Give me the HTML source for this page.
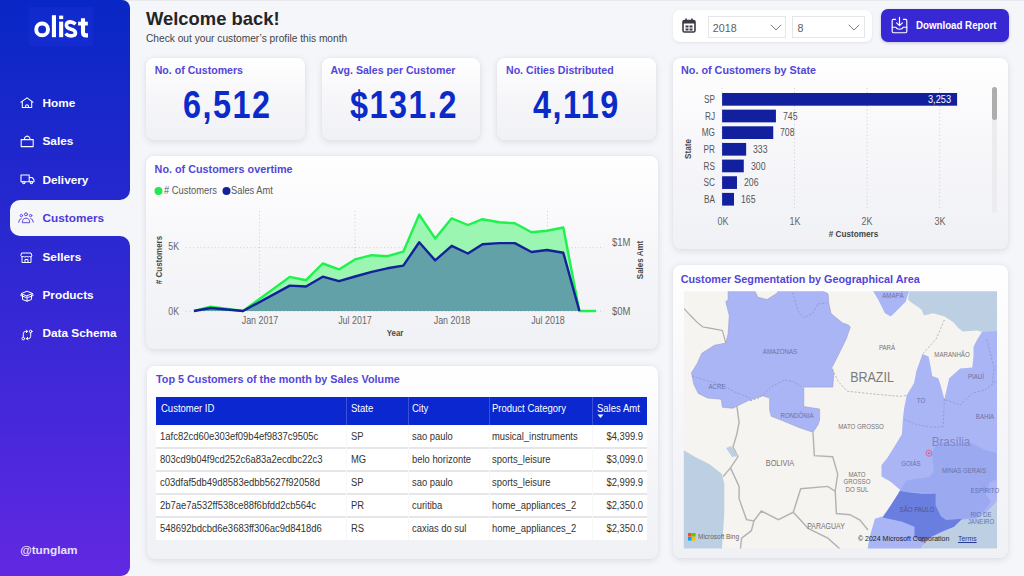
<!DOCTYPE html><html><head><meta charset="utf-8"><style>
html,body{margin:0;padding:0;}
body{width:1024px;height:576px;overflow:hidden;position:relative;background:#f5f6fa;font-family:"Liberation Sans", sans-serif;}
.t{position:absolute;white-space:nowrap;line-height:1;}
.card{position:absolute;border-radius:8px;background:linear-gradient(180deg,#ffffff 0%,#f7f7fa 45%,#f0f1f5 100%);box-shadow:0 1.5px 6px rgba(50,50,80,0.12),0 0 1.5px rgba(50,50,80,0.06);}
svg{position:absolute;overflow:visible;}
</style></head><body>

<div style="position:absolute;left:0px;top:0px;width:1024px;height:1px;background:#e9eaee"></div>
<div style="position:absolute;left:0px;top:0px;width:129.5px;height:199.5px;border-radius:0 8px 10px 0;background:linear-gradient(180deg,#0927c6 0%,#2a28d0 40%,#4428da 70%,#6228e2 100%);background-size:130px 576px;background-position:0 0px;"></div>
<div style="position:absolute;left:0px;top:190px;width:20px;height:56px;border-radius:0;background:linear-gradient(180deg,#0927c6 0%,#2a28d0 40%,#4428da 70%,#6228e2 100%);background-size:130px 576px;background-position:0 -190px;"></div>
<div style="position:absolute;left:0px;top:235.5px;width:129.5px;height:340.5px;border-radius:0 10px 9px 0;background:linear-gradient(180deg,#0927c6 0%,#2a28d0 40%,#4428da 70%,#6228e2 100%);background-size:130px 576px;background-position:0 -235.5px;"></div>
<div style="position:absolute;left:9.5px;top:199.5px;width:125px;height:36px;background:#f5f6fa;border-radius:10px 0 0 10px"></div>
<div style="position:absolute;left:29px;top:7px;width:64px;height:39px;background:rgba(40,60,240,0.18)"></div>
<svg style="left:0;top:0" width="100" height="50"><g fill="#ffffff"><circle cx="42.1" cy="29.4" r="5.9" fill="none" stroke="#ffffff" stroke-width="3.9"/><rect x="51.9" y="15.2" width="4.1" height="22"/><rect x="59.1" y="15.6" width="4.1" height="3.5"/><rect x="59.1" y="21.6" width="4.1" height="15.6"/><rect x="78.1" y="21.7" width="9.7" height="3.8"/></g><g fill="none" stroke="#ffffff" stroke-linecap="butt"><path d="M75.6 24.2 Q72.5 21.6 69.8 21.9 Q66.3 22.3 66.4 25.4 Q66.6 28 70.6 29 Q75.4 30.2 75.5 33.1 Q75.5 35.9 71.2 35.9 Q67.8 36 65.6 33.6" stroke-width="3.6"/><path d="M83 18.3 V32.2 Q83 35.4 86.2 35.4 H88" stroke-width="4.1"/></g></svg>
<div class="t" style="left:42.50px;top:98.01px;font-size:11.8px;font-weight:700;color:#ffffff;transform-origin:0 0;">Home</div>
<div class="t" style="left:42.50px;top:136.41px;font-size:11.8px;font-weight:700;color:#ffffff;transform-origin:0 0;">Sales</div>
<div class="t" style="left:42.50px;top:175.01px;font-size:11.8px;font-weight:700;color:#ffffff;transform-origin:0 0;">Delivery</div>
<div class="t" style="left:42.50px;top:213.41px;font-size:11.8px;font-weight:700;color:#4b3ad8;transform-origin:0 0;">Customers</div>
<div class="t" style="left:42.50px;top:251.71px;font-size:11.8px;font-weight:700;color:#ffffff;transform-origin:0 0;">Sellers</div>
<div class="t" style="left:42.50px;top:290.11px;font-size:11.8px;font-weight:700;color:#ffffff;transform-origin:0 0;">Products</div>
<div class="t" style="left:42.50px;top:328.41px;font-size:11.8px;font-weight:700;color:#ffffff;transform-origin:0 0;">Data Schema</div>
<div class="t" style="left:20.20px;top:545.31px;font-size:11.8px;font-weight:700;color:#e6e0fa;transform-origin:0 0;">@tunglam</div>
<svg style="left:20px;top:96.5px" width="14" height="12" viewBox="0 0 14 12"><g fill="none" stroke="#ffffff" stroke-width="1.05" stroke-linejoin="round" stroke-linecap="round"><path d="M1 5.2 L7 0.8 L13 5.2 M2.3 4.3 V10.5 H11.7 V4.3 M5.6 10.5 V8.6 Q7 7 8.4 8.6 V10.5"/></g></svg>
<svg style="left:19.5px;top:135px" width="15" height="12.5" viewBox="0 0 15 12.5"><g fill="none" stroke="#ffffff" stroke-width="1.05" stroke-linejoin="round" stroke-linecap="round"><path d="M1.2 4.6 H13.2 V11.6 H1.2 Z M4.6 4.6 V2.8 Q7.2 -0.6 9.8 2.8 V4.6"/></g></svg>
<svg style="left:19.5px;top:173.5px" width="15" height="11" viewBox="0 0 15 11"><g fill="none" stroke="#ffffff" stroke-width="1.05" stroke-linejoin="round" stroke-linecap="round"><path d="M1 1 H9.2 V7.8 H1 Z M9.2 3.4 H12 L14 5.8 V7.8 H9.2"/><circle cx="3.8" cy="8.6" r="1.2"/><circle cx="11.4" cy="8.6" r="1.2"/></g></svg>
<svg style="left:18px;top:211.5px" width="16" height="12" viewBox="0 0 16 12"><g fill="none" stroke="#5a48dc" stroke-width="1.0" stroke-linejoin="round" stroke-linecap="round"><circle cx="8" cy="2.3" r="1.5"/><circle cx="3.4" cy="3.6" r="1.2"/><circle cx="12.6" cy="3.6" r="1.2"/><path d="M4.3 10.3 Q4.3 6.2 8 6.2 Q11.7 6.2 11.7 10.3 Z M0.7 10.2 Q0.9 6.6 3.2 6.6 M15.3 10.2 Q15.1 6.6 12.8 6.6"/></g></svg>
<svg style="left:20.5px;top:251.5px" width="12" height="12" viewBox="0 0 12 12"><g fill="none" stroke="#ffffff" stroke-width="1.0" stroke-linejoin="round" stroke-linecap="round"><path d="M1 1 H10 L11 4 Q10 5.5 8.5 4.5 Q7.5 5.5 5.5 4.5 Q3.5 5.5 2.5 4.5 Q1 5.5 0 4 Z M1 5 V10.5 H10 V5 M4 10.5 V7.5 H7 V10.5"/></g></svg>
<svg style="left:19.5px;top:289.5px" width="14" height="12" viewBox="0 0 14 12"><g fill="none" stroke="#ffffff" stroke-width="1.0" stroke-linejoin="round" stroke-linecap="round"><path d="M1.5 3.5 L7 1.2 L12.5 3.5 L7 5.8 Z M2.5 5 V9.5 L7 11.2 L11.5 9.5 V5 M7 5.8 V11.2 M1.5 3.5 L0.8 5.5 L6 7.5 M12.5 3.5 L13.2 5.5 L8 7.5"/></g></svg>
<svg style="left:20.5px;top:328.5px" width="12" height="12" viewBox="0 0 12 12"><g fill="none" stroke="#ffffff" stroke-width="1.0" stroke-linejoin="round" stroke-linecap="round"><circle cx="2.3" cy="9.6" r="1.3"/><circle cx="9.7" cy="2.4" r="1.3"/><path d="M2.3 8.3 V4.6 Q2.3 2.4 4.5 2.4 H6.6 M5.3 1.1 L6.6 2.4 L5.3 3.7 M9.7 3.7 V7.4 Q9.7 9.6 7.5 9.6 H5.4 M6.7 8.3 L5.4 9.6 L6.7 10.9"/></g></svg>
<div class="t" style="left:146.00px;top:9.82px;font-size:18.4px;font-weight:700;color:#252525;transform-origin:0 0;">Welcome back!</div>
<div class="t" style="left:146.00px;top:34.27px;font-size:10.2px;font-weight:400;color:#444444;transform-origin:0 0;">Check out your customer&#8217;s profile this month</div>
<div style="position:absolute;left:673px;top:10px;width:199px;height:32px;background:#ffffff;border-radius:7px;box-shadow:0 1px 3px rgba(60,60,90,0.10)"></div>
<svg style="left:682px;top:18px" width="14" height="15" viewBox="0 0 14 15"><rect x="1" y="2.5" width="12" height="11.5" rx="1.5" fill="none" stroke="#3a3a48" stroke-width="1.6"/><rect x="1" y="2.5" width="12" height="3" fill="#3a3a48"/><rect x="3.3" y="0.5" width="1.6" height="3" fill="#3a3a48"/><rect x="9.1" y="0.5" width="1.6" height="3" fill="#3a3a48"/><rect x="3.5" y="7.5" width="3" height="2" fill="#3a3a48"/><rect x="7.5" y="7.5" width="3" height="2" fill="#3a3a48"/><rect x="3.5" y="10.5" width="3" height="2" fill="#3a3a48"/><rect x="7.5" y="10.5" width="3" height="2" fill="#3a3a48"/></svg>
<div style="position:absolute;left:708px;top:16px;width:78px;height:21.5px;box-sizing:border-box;border:1px solid #e6e6e8;background:#fff"></div>
<div style="position:absolute;left:792.3px;top:16px;width:72.3px;height:21.5px;box-sizing:border-box;border:1px solid #e6e6e8;background:#fff"></div>
<div class="t" style="left:712.80px;top:23.24px;font-size:10.7px;font-weight:400;color:#606060;transform-origin:0 0;">2018</div>
<div class="t" style="left:797.40px;top:23.24px;font-size:10.7px;font-weight:400;color:#606060;transform-origin:0 0;">8</div>
<svg style="left:769.5px;top:24px" width="12" height="7" viewBox="0 0 12 7"><path d="M0.8 0.8 L6 6 L11.2 0.8" fill="none" stroke="#7a8088" stroke-width="1"/></svg>
<svg style="left:848.2px;top:24px" width="12" height="7" viewBox="0 0 12 7"><path d="M0.8 0.8 L6 6 L11.2 0.8" fill="none" stroke="#7a8088" stroke-width="1"/></svg>
<div style="position:absolute;left:881px;top:9px;width:128px;height:32.5px;background:#3828d4;border-radius:7px;box-shadow:0 1px 3px rgba(40,30,120,0.25)"></div>
<svg style="left:891px;top:16px" width="17" height="18" viewBox="0 0 17 18"><g fill="none" stroke="#ffffff" stroke-width="1.15" stroke-linejoin="round" stroke-linecap="round"><path d="M4.6 3.3 H2.3 Q1.2 3.3 1.2 4.4 V15.6 Q1.2 16.7 2.3 16.7 H14.7 Q15.8 16.7 15.8 15.6 V4.4 Q15.8 3.3 14.7 3.3 H12.4"/><path d="M1.2 11.2 H4.8 Q5.6 13.2 8.5 13.2 Q11.4 13.2 12.2 11.2 H15.8"/><path d="M8.5 1.2 V9.5 M5.6 6.8 L8.5 9.7 L11.4 6.8"/></g></svg>
<div class="t" style="left:915.60px;top:21.20px;font-size:10.4px;font-weight:700;color:#ffffff;transform:scaleX(0.935);transform-origin:0 0;">Download Report</div>
<div class="card" style="left:146px;top:57.8px;width:159px;height:82px;"></div>
<div class="t" style="left:154.70px;top:64.83px;font-size:10.6px;font-weight:700;color:#5246d8;transform-origin:0 0;">No. of Customers</div>
<div class="t" style="left:183.00px;top:84.99px;font-size:39px;font-weight:700;color:#0b2bc9;transform:scaleX(0.83);transform-origin:0 0;letter-spacing:1.8px;">6,512</div>
<div class="card" style="left:321.7px;top:57.8px;width:158.5px;height:82px;"></div>
<div class="t" style="left:330.40px;top:64.83px;font-size:10.6px;font-weight:700;color:#5246d8;transform-origin:0 0;">Avg. Sales per Customer</div>
<div class="t" style="left:350.00px;top:84.99px;font-size:39px;font-weight:700;color:#0b2bc9;transform:scaleX(0.83);transform-origin:0 0;letter-spacing:1.8px;">$131.2</div>
<div class="card" style="left:497.3px;top:57.8px;width:158.5px;height:82px;"></div>
<div class="t" style="left:506.00px;top:64.83px;font-size:10.6px;font-weight:700;color:#5246d8;transform-origin:0 0;">No. Cities Distributed</div>
<div class="t" style="left:533.00px;top:84.99px;font-size:39px;font-weight:700;color:#0b2bc9;transform:scaleX(0.83);transform-origin:0 0;letter-spacing:1.8px;">4,119</div>
<div class="card" style="left:146px;top:156.3px;width:511.5px;height:192.5px;"></div>
<div class="t" style="left:154.60px;top:163.86px;font-size:10.8px;font-weight:700;color:#5246d8;transform-origin:0 0;">No. of Customers overtime</div>
<svg style="left:154px;top:186px" width="80" height="10"><circle cx="4.5" cy="5" r="4" fill="#22e854"/><circle cx="226" cy="5" r="0" fill="none"/></svg>
<svg style="left:221.5px;top:186px" width="10" height="10"><circle cx="4.5" cy="5" r="4" fill="#13209a"/></svg>
<div class="t" style="left:164.40px;top:186.03px;font-size:10px;font-weight:400;color:#5a5a5a;transform:scaleX(0.935);transform-origin:0 0;"># Customers</div>
<div class="t" style="left:231.40px;top:186.03px;font-size:10px;font-weight:400;color:#5a5a5a;transform:scaleX(0.93);transform-origin:0 0;">Sales Amt</div>
<div class="t" style="left:-221.00px;width:400px;text-align:right;top:242.34px;font-size:10px;font-weight:400;color:#666666;transform:scaleX(0.88);transform-origin:100% 0;">5K</div>
<div class="t" style="left:-221.00px;width:400px;text-align:right;top:306.54px;font-size:10px;font-weight:400;color:#666666;transform:scaleX(0.88);transform-origin:100% 0;">0K</div>
<div class="t" style="left:611.70px;top:238.44px;font-size:10px;font-weight:400;color:#666666;transform:scaleX(0.95);transform-origin:0 0;">$1M</div>
<div class="t" style="left:611.70px;top:307.14px;font-size:10px;font-weight:400;color:#666666;transform:scaleX(0.95);transform-origin:0 0;">$0M</div>
<div class="t" style="left:59.50px;width:400px;text-align:center;top:316.04px;font-size:10px;font-weight:400;color:#666666;transform:scaleX(0.89);transform-origin:50% 0;">Jan 2017</div>
<div class="t" style="left:155.00px;width:400px;text-align:center;top:316.04px;font-size:10px;font-weight:400;color:#666666;transform:scaleX(0.89);transform-origin:50% 0;">Jul 2017</div>
<div class="t" style="left:251.70px;width:400px;text-align:center;top:316.04px;font-size:10px;font-weight:400;color:#666666;transform:scaleX(0.89);transform-origin:50% 0;">Jan 2018</div>
<div class="t" style="left:347.50px;width:400px;text-align:center;top:316.04px;font-size:10px;font-weight:400;color:#666666;transform:scaleX(0.89);transform-origin:50% 0;">Jul 2018</div>
<div class="t" style="left:195.20px;width:400px;text-align:center;top:328.98px;font-size:9px;font-weight:700;color:#4a4a4a;transform:scaleX(0.88);transform-origin:50% 0;">Year</div>
<div class="t" style="left:158.5px;top:260px;font-size:9px;font-weight:700;color:#484848;transform:translate(-50%,-50%) rotate(-90deg) scaleX(0.885);">&#35; Customers</div>
<div class="t" style="left:640.2px;top:260px;font-size:9px;font-weight:700;color:#484848;transform:translate(-50%,-50%) rotate(-90deg) scaleX(0.887);">Sales Amt</div>
<svg style="left:0;top:0" width="1024" height="576"><g stroke="#cdcdd2" stroke-width="1" stroke-dasharray="1,2.6"><line x1="186" y1="247.7" x2="604" y2="247.7"/><line x1="186" y1="311.3" x2="604" y2="311.3"/><line x1="259.5" y1="211" x2="259.5" y2="311"/><line x1="355" y1="211" x2="355" y2="311"/><line x1="451.7" y1="211" x2="451.7" y2="311"/><line x1="547.5" y1="211" x2="547.5" y2="311"/></g><polygon points="194.0,311.0 210.6,306.7 243.0,311.0 289.8,276.9 306.0,280.2 322.7,263.5 339.0,269.4 355.0,259.4 371.7,255.2 387.3,256.2 403.3,251.7 419.2,214.6 435.2,238.5 451.7,218.3 467.9,225.0 482.5,219.2 499.2,222.3 514.8,223.3 531.5,232.3 547.0,230.8 563.3,227.5 579.4,311.0 596.0,311.0 194,311" fill="#9af6b0"/><polygon points="194.0,311.0 210.6,308.0 243.0,311.0 289.8,285.6 306.0,286.5 322.7,276.7 339.0,281.2 355.0,276.5 371.7,271.9 387.3,268.3 403.3,265.6 419.2,242.3 435.2,260.4 451.7,245.8 467.9,253.5 482.5,244.2 499.2,243.1 514.8,243.1 531.5,252.0 547.0,250.0 563.3,252.7 579.4,311.0 194,311" fill="#63a1a8"/><polyline points="194.0,311.0 210.6,306.7 243.0,311.0 289.8,276.9 306.0,280.2 322.7,263.5 339.0,269.4 355.0,259.4 371.7,255.2 387.3,256.2 403.3,251.7 419.2,214.6 435.2,238.5 451.7,218.3 467.9,225.0 482.5,219.2 499.2,222.3 514.8,223.3 531.5,232.3 547.0,230.8 563.3,227.5 579.4,311.0 596.0,311.0" fill="none" stroke="#1ef24c" stroke-width="2.4" stroke-linejoin="round"/><polyline points="194.0,311.0 210.6,308.0 243.0,311.0 289.8,285.6 306.0,286.5 322.7,276.7 339.0,281.2 355.0,276.5 371.7,271.9 387.3,268.3 403.3,265.6 419.2,242.3 435.2,260.4 451.7,245.8 467.9,253.5 482.5,244.2 499.2,243.1 514.8,243.1 531.5,252.0 547.0,250.0 563.3,252.7 579.4,311.0" fill="none" stroke="#14229a" stroke-width="2.4" stroke-linejoin="round"/></svg>
<div class="card" style="left:146.5px;top:365.7px;width:511.2px;height:193px;"></div>
<div class="t" style="left:156.00px;top:373.76px;font-size:10.8px;font-weight:700;color:#5246d8;transform-origin:0 0;">Top 5 Customers of the month by Sales Volume</div>
<div style="position:absolute;left:156px;top:396.5px;width:491px;height:28px;background:#0b27cf"></div>
<div style="position:absolute;left:346.3px;top:396.5px;width:1px;height:28px;background:#3a50dc"></div>
<div style="position:absolute;left:408.3px;top:396.5px;width:1px;height:28px;background:#3a50dc"></div>
<div style="position:absolute;left:488.5px;top:396.5px;width:1px;height:28px;background:#3a50dc"></div>
<div style="position:absolute;left:592.4px;top:396.5px;width:1px;height:28px;background:#3a50dc"></div>
<div style="position:absolute;left:156px;top:424.5px;width:491px;height:115.5px;background:#ffffff"></div>
<div style="position:absolute;left:156px;top:447.0px;width:491px;height:1.6px;background:#e6e6e9"></div>
<div style="position:absolute;left:156px;top:470.1px;width:491px;height:1.6px;background:#e6e6e9"></div>
<div style="position:absolute;left:156px;top:493.2px;width:491px;height:1.6px;background:#e6e6e9"></div>
<div style="position:absolute;left:156px;top:516.3px;width:491px;height:1.6px;background:#e6e6e9"></div>
<div style="position:absolute;left:346.3px;top:424.5px;width:1px;height:115.5px;background:#f7f7f8"></div>
<div style="position:absolute;left:408.3px;top:424.5px;width:1px;height:115.5px;background:#f7f7f8"></div>
<div style="position:absolute;left:488.5px;top:424.5px;width:1px;height:115.5px;background:#f7f7f8"></div>
<div style="position:absolute;left:592.4px;top:424.5px;width:1px;height:115.5px;background:#f7f7f8"></div>
<div class="t" style="left:160.50px;top:403.54px;font-size:10px;font-weight:400;color:#ffffff;transform:scaleX(0.95);transform-origin:0 0;">Customer ID</div>
<div class="t" style="left:350.70px;top:403.54px;font-size:10px;font-weight:400;color:#ffffff;transform:scaleX(0.95);transform-origin:0 0;">State</div>
<div class="t" style="left:412.40px;top:403.54px;font-size:10px;font-weight:400;color:#ffffff;transform:scaleX(0.95);transform-origin:0 0;">City</div>
<div class="t" style="left:492.40px;top:403.54px;font-size:10px;font-weight:400;color:#ffffff;transform:scaleX(0.95);transform-origin:0 0;">Product Category</div>
<div class="t" style="left:596.60px;top:403.54px;font-size:10px;font-weight:400;color:#ffffff;transform:scaleX(0.95);transform-origin:0 0;">Sales Amt</div>
<svg style="left:596.5px;top:414px" width="8" height="5"><path d="M0.5 0.5 H6.5 L3.5 4 Z" fill="#ffffff"/></svg>
<div class="t" style="left:160.30px;top:431.74px;font-size:10px;font-weight:400;color:#333333;transform:scaleX(0.946);transform-origin:0 0;">1afc82cd60e303ef09b4ef9837c9505c</div>
<div class="t" style="left:350.70px;top:431.74px;font-size:10px;font-weight:400;color:#333333;transform:scaleX(0.94);transform-origin:0 0;">SP</div>
<div class="t" style="left:412.40px;top:431.74px;font-size:10px;font-weight:400;color:#333333;transform:scaleX(0.94);transform-origin:0 0;">sao paulo</div>
<div class="t" style="left:492.40px;top:431.74px;font-size:10px;font-weight:400;color:#333333;transform:scaleX(0.94);transform-origin:0 0;">musical_instruments</div>
<div class="t" style="left:243.00px;width:400px;text-align:right;top:431.74px;font-size:10px;font-weight:400;color:#333333;transform:scaleX(0.94);transform-origin:100% 0;">$4,399.9</div>
<div class="t" style="left:160.30px;top:454.84px;font-size:10px;font-weight:400;color:#333333;transform:scaleX(0.946);transform-origin:0 0;">803cd9b04f9cd252c6a83a2ecdbc22c3</div>
<div class="t" style="left:350.70px;top:454.84px;font-size:10px;font-weight:400;color:#333333;transform:scaleX(0.94);transform-origin:0 0;">MG</div>
<div class="t" style="left:412.40px;top:454.84px;font-size:10px;font-weight:400;color:#333333;transform:scaleX(0.94);transform-origin:0 0;">belo horizonte</div>
<div class="t" style="left:492.40px;top:454.84px;font-size:10px;font-weight:400;color:#333333;transform:scaleX(0.94);transform-origin:0 0;">sports_leisure</div>
<div class="t" style="left:243.00px;width:400px;text-align:right;top:454.84px;font-size:10px;font-weight:400;color:#333333;transform:scaleX(0.94);transform-origin:100% 0;">$3,099.0</div>
<div class="t" style="left:160.30px;top:477.94px;font-size:10px;font-weight:400;color:#333333;transform:scaleX(0.946);transform-origin:0 0;">c03dfaf5db49d8583edbb5627f92058d</div>
<div class="t" style="left:350.70px;top:477.94px;font-size:10px;font-weight:400;color:#333333;transform:scaleX(0.94);transform-origin:0 0;">SP</div>
<div class="t" style="left:412.40px;top:477.94px;font-size:10px;font-weight:400;color:#333333;transform:scaleX(0.94);transform-origin:0 0;">sao paulo</div>
<div class="t" style="left:492.40px;top:477.94px;font-size:10px;font-weight:400;color:#333333;transform:scaleX(0.94);transform-origin:0 0;">sports_leisure</div>
<div class="t" style="left:243.00px;width:400px;text-align:right;top:477.94px;font-size:10px;font-weight:400;color:#333333;transform:scaleX(0.94);transform-origin:100% 0;">$2,999.9</div>
<div class="t" style="left:160.30px;top:501.04px;font-size:10px;font-weight:400;color:#333333;transform:scaleX(0.946);transform-origin:0 0;">2b7ae7a532ff538ce88f6bfdd2cb564c</div>
<div class="t" style="left:350.70px;top:501.04px;font-size:10px;font-weight:400;color:#333333;transform:scaleX(0.94);transform-origin:0 0;">PR</div>
<div class="t" style="left:412.40px;top:501.04px;font-size:10px;font-weight:400;color:#333333;transform:scaleX(0.94);transform-origin:0 0;">curitiba</div>
<div class="t" style="left:492.40px;top:501.04px;font-size:10px;font-weight:400;color:#333333;transform:scaleX(0.94);transform-origin:0 0;">home_appliances_2</div>
<div class="t" style="left:243.00px;width:400px;text-align:right;top:501.04px;font-size:10px;font-weight:400;color:#333333;transform:scaleX(0.94);transform-origin:100% 0;">$2,350.0</div>
<div class="t" style="left:160.30px;top:524.13px;font-size:10px;font-weight:400;color:#333333;transform:scaleX(0.946);transform-origin:0 0;">548692bdcbd6e3683ff306ac9d8418d6</div>
<div class="t" style="left:350.70px;top:524.13px;font-size:10px;font-weight:400;color:#333333;transform:scaleX(0.94);transform-origin:0 0;">RS</div>
<div class="t" style="left:412.40px;top:524.13px;font-size:10px;font-weight:400;color:#333333;transform:scaleX(0.94);transform-origin:0 0;">caxias do sul</div>
<div class="t" style="left:492.40px;top:524.13px;font-size:10px;font-weight:400;color:#333333;transform:scaleX(0.94);transform-origin:0 0;">home_appliances_2</div>
<div class="t" style="left:243.00px;width:400px;text-align:right;top:524.13px;font-size:10px;font-weight:400;color:#333333;transform:scaleX(0.94);transform-origin:100% 0;">$2,350.0</div>
<div class="card" style="left:673.3px;top:57.8px;width:334.5px;height:191px;"></div>
<div class="t" style="left:681.00px;top:64.66px;font-size:10.8px;font-weight:700;color:#5246d8;transform-origin:0 0;">No. of Customers by State</div>
<svg style="left:0;top:0" width="1024" height="576"><g stroke="#cdcdd2" stroke-width="1" stroke-dasharray="1,2.6"><line x1="722.1" y1="88" x2="722.1" y2="210"/><line x1="794.5" y1="88" x2="794.5" y2="210"/><line x1="867.1" y1="88" x2="867.1" y2="210"/><line x1="939.7" y1="88" x2="939.7" y2="210"/></g><rect x="722.1" y="93.00" width="235.00" height="12.7" fill="#12209e"/><rect x="722.1" y="109.65" width="53.82" height="12.7" fill="#12209e"/><rect x="722.1" y="126.30" width="51.15" height="12.7" fill="#12209e"/><rect x="722.1" y="142.95" width="24.06" height="12.7" fill="#12209e"/><rect x="722.1" y="159.60" width="21.67" height="12.7" fill="#12209e"/><rect x="722.1" y="176.25" width="14.88" height="12.7" fill="#12209e"/><rect x="722.1" y="192.90" width="11.92" height="12.7" fill="#12209e"/></svg>
<div class="t" style="left:314.90px;width:400px;text-align:right;top:95.03px;font-size:10px;font-weight:400;color:#555555;transform:scaleX(0.82);transform-origin:100% 0;">SP</div>
<div class="t" style="left:550.50px;width:400px;text-align:right;top:95.03px;font-size:10px;font-weight:400;color:#ffffff;transform:scaleX(0.92);transform-origin:100% 0;">3,253</div>
<div class="t" style="left:314.90px;width:400px;text-align:right;top:111.69px;font-size:10px;font-weight:400;color:#555555;transform:scaleX(0.82);transform-origin:100% 0;">RJ</div>
<div class="t" style="left:782.72px;top:111.69px;font-size:10px;font-weight:400;color:#555555;transform:scaleX(0.87);transform-origin:0 0;">745</div>
<div class="t" style="left:314.90px;width:400px;text-align:right;top:128.34px;font-size:10px;font-weight:400;color:#555555;transform:scaleX(0.82);transform-origin:100% 0;">MG</div>
<div class="t" style="left:780.05px;top:128.34px;font-size:10px;font-weight:400;color:#555555;transform:scaleX(0.87);transform-origin:0 0;">708</div>
<div class="t" style="left:314.90px;width:400px;text-align:right;top:144.98px;font-size:10px;font-weight:400;color:#555555;transform:scaleX(0.82);transform-origin:100% 0;">PR</div>
<div class="t" style="left:752.96px;top:144.98px;font-size:10px;font-weight:400;color:#555555;transform:scaleX(0.87);transform-origin:0 0;">333</div>
<div class="t" style="left:314.90px;width:400px;text-align:right;top:161.63px;font-size:10px;font-weight:400;color:#555555;transform:scaleX(0.82);transform-origin:100% 0;">RS</div>
<div class="t" style="left:750.57px;top:161.63px;font-size:10px;font-weight:400;color:#555555;transform:scaleX(0.87);transform-origin:0 0;">300</div>
<div class="t" style="left:314.90px;width:400px;text-align:right;top:178.28px;font-size:10px;font-weight:400;color:#555555;transform:scaleX(0.82);transform-origin:100% 0;">SC</div>
<div class="t" style="left:743.78px;top:178.28px;font-size:10px;font-weight:400;color:#555555;transform:scaleX(0.87);transform-origin:0 0;">206</div>
<div class="t" style="left:314.90px;width:400px;text-align:right;top:194.93px;font-size:10px;font-weight:400;color:#555555;transform:scaleX(0.82);transform-origin:100% 0;">BA</div>
<div class="t" style="left:740.82px;top:194.93px;font-size:10px;font-weight:400;color:#555555;transform:scaleX(0.87);transform-origin:0 0;">165</div>
<div class="t" style="left:522.90px;width:400px;text-align:center;top:217.13px;font-size:10px;font-weight:400;color:#666666;transform:scaleX(0.9);transform-origin:50% 0;">0K</div>
<div class="t" style="left:595.10px;width:400px;text-align:center;top:217.13px;font-size:10px;font-weight:400;color:#666666;transform:scaleX(0.9);transform-origin:50% 0;">1K</div>
<div class="t" style="left:667.10px;width:400px;text-align:center;top:217.13px;font-size:10px;font-weight:400;color:#666666;transform:scaleX(0.9);transform-origin:50% 0;">2K</div>
<div class="t" style="left:739.70px;width:400px;text-align:center;top:217.13px;font-size:10px;font-weight:400;color:#666666;transform:scaleX(0.9);transform-origin:50% 0;">3K</div>
<div class="t" style="left:653.50px;width:400px;text-align:center;top:231.06px;font-size:8.2px;font-weight:700;color:#444444;transform-origin:50% 0;">&#35; Customers</div>
<div class="t" style="left:687.8px;top:149.3px;font-size:9px;font-weight:700;color:#484848;transform:translate(-50%,-50%) rotate(-90deg) scaleX(0.9);">State</div>
<div style="position:absolute;left:991.5px;top:86.8px;width:5.5px;height:126px;background:#ececee;border-radius:3px"></div>
<div style="position:absolute;left:991.5px;top:86.8px;width:5.5px;height:33px;background:#adadad;border-radius:3px"></div>
<div class="card" style="left:673.3px;top:264.9px;width:334.5px;height:293.3px;"></div>
<div class="t" style="left:680.70px;top:273.76px;font-size:10.8px;font-weight:700;color:#5246d8;transform-origin:0 0;">Customer Segmentation by Geographical Area</div>
<svg style="left:0;top:0" width="1024" height="576"><defs><clipPath id="mc"><rect x="683.8" y="291.3" width="313.20000000000005" height="257.09999999999997"/></clipPath></defs><g clip-path="url(#mc)"><rect x="683.8" y="291.3" width="313.20000000000005" height="257.09999999999997" fill="#f6f4f0"/><polygon points="680.0,448.0 694.8,456.8 709.6,464.2 721.9,474.0 724.3,483.9 724.3,513.5 721.9,549.0 680.0,549.0" fill="#bdd0e3" /><polygon points="910.2,288.0 1000.0,288.0 1000.0,332.7 985.8,332.7 976.6,330.4 962.9,331.5 958.3,328.1 953.7,322.4 944.5,316.6 933.1,313.2 923.9,315.5 921.6,309.8 917.0,306.3 910.2,301.7 907.9,299.5" fill="#bdd0e3" /><polygon points="1000.0,498.0 988.4,510.9 977.8,518.8 962.0,520.1 954.1,526.7 940.9,533.3 930.3,538.6 922.4,545.7 919.8,552.0 1000.0,552.0" fill="#bdd0e3" /><polyline points="684.1,308.6 690.0,315.0 697.2,322.4 703.0,327.0 709.8,328.1 722.4,330.4 725.8,343.0" fill="none" stroke="#aaaaaa" stroke-width="1.1"/><polygon points="728.1,288.0 753.4,288.0 757.9,297.2 767.1,299.5 776.3,293.7 780.9,288.0 822.1,288.0 822.1,290.7 828.0,293.8 828.9,303.6 830.9,313.3 836.7,318.2 842.6,323.0 848.4,325.0 850.3,326.9 846.4,338.6 838.7,354.2 831.8,367.8 833.8,373.6 832.8,387.1 803.8,387.1 803.8,406.6 819.6,409.0 819.6,420.0 818.0,424.8 813.0,432.2 798.3,427.2 783.5,421.1 771.2,416.2 769.7,410.3 769.7,398.1 762.5,395.7 748.8,400.3 732.7,408.3 722.4,407.2 721.3,399.2 707.5,398.0 698.3,393.4 693.8,384.3 691.5,372.8 697.2,363.6 701.8,353.3 714.4,345.3 725.8,343.0 728.1,333.8 729.3,315.5 725.8,301.8 728.1,299.5" fill="#aab5f6" stroke="#9aa0c8" stroke-width="0.6"/><polygon points="871.2,288.0 910.2,288.0 905.6,301.7 896.4,310.9 890.7,316.6 885.0,313.2 878.1,299.5" fill="#aab5f6" /><polygon points="922.5,354.0 916.4,371.0 914.0,383.2 906.7,395.3 904.3,407.4 903.0,417.2 901.9,434.2 894.6,446.3 887.3,458.0 881.5,465.0 881.5,476.6 890.7,481.8 900.0,489.8 897.3,495.0 890.7,505.6 882.8,516.2 874.9,518.8 869.6,537.3 867.0,552.0 919.8,552.0 922.4,545.7 930.3,538.6 940.9,533.3 954.1,526.7 962.0,520.1 977.8,518.8 988.4,510.9 1000.0,498.0 1000.0,331.0 996.6,331.0 982.0,332.1 977.2,339.4 973.5,346.7 973.5,356.4 972.3,367.4 960.2,368.6 949.2,378.3 944.4,399.0 940.7,385.6 938.3,378.3 932.2,375.9 931.0,368.6 928.6,356.4" fill="#aab5f6" /><polygon points="932.1,453.9 933.8,447.8 942.5,442.6 952.9,444.3 970.3,442.6 984.2,449.5 996.4,453.0 996.4,479.0 989.4,482.5 986.0,494.7 991.1,501.6 985.0,510.0 975.0,518.0 962.0,519.0 946.2,520.1 940.9,516.2 933.8,506.8 932.1,493.0 900.8,492.0 900.8,489.5 906.0,480.8 914.7,479.0 928.6,477.3 933.8,472.1" fill="#9ba9f0" /><polygon points="900.0,491.0 909.2,492.4 922.4,493.7 935.6,493.7 935.6,505.6 940.9,516.2 946.2,520.1 962.0,518.8 954.1,526.7 940.9,532.0 930.3,537.3 922.4,542.6 914.5,537.3 914.5,526.7 901.3,521.4 882.8,517.5 890.7,505.6" fill="#6a7ee0" /><polyline points="736.7,405.0 739.1,422.3 736.7,434.6 733.0,447.0 737.9,456.8 730.5,467.9 723.1,476.5" fill="none" stroke="#b3b3b3" stroke-width="1.45"/><polyline points="730.5,467.9 739.1,486.4 739.1,498.7 746.5,519.6 753.9,520.9 761.3,511.0 778.5,519.6 793.3,512.2 800.7,488.8 827.8,486.4 835.2,491.3 837.7,474.0 832.7,456.8 814.3,455.6 813.0,432.2" fill="none" stroke="#b3b3b3" stroke-width="1.45"/><polyline points="753.9,520.9 751.4,530.7 741.6,538.1 740.4,549.0" fill="none" stroke="#b3b3b3" stroke-width="1.45"/><polyline points="793.3,512.2 808.1,528.3 827.8,538.1 840.1,549.0" fill="none" stroke="#b3b3b3" stroke-width="1.45"/><polyline points="835.2,491.3 836.4,513.5 850.0,514.7 860.0,520.0 868.0,530.0" fill="none" stroke="#b3b3b3" stroke-width="1.45"/><polyline points="832.8,369.0 835.0,375.0 838.5,381.7 847.2,391.2 871.5,393.8 900.0,396.4 906.7,395.3" fill="none" stroke="#b4b4b4" stroke-width="0.9" stroke-dasharray="2.2,1.6"/><polyline points="750.0,400.8 760.4,397.3 770.8,386.9 784.7,379.9 793.4,381.7 802.0,386.9" fill="none" stroke="#8f98d6" stroke-width="0.9" stroke-dasharray="2.2,1.6"/><polyline points="692.0,376.0 705.0,380.0 720.0,384.0 735.0,392.0 750.0,398.0" fill="none" stroke="#8f98d6" stroke-width="0.9" stroke-dasharray="2.2,1.6"/><polyline points="944.4,320.0 935.9,339.4 922.5,354.0" fill="none" stroke="#b4b4b4" stroke-width="0.9" stroke-dasharray="2.2,1.6"/><polyline points="944.4,399.0 943.2,426.9" fill="none" stroke="#8f98d6" stroke-width="0.9" stroke-dasharray="2.2,1.6"/><polyline points="904.3,419.6 916.4,424.4 928.6,426.9 943.2,426.9" fill="none" stroke="#8f98d6" stroke-width="0.9" stroke-dasharray="2.2,1.6"/><polyline points="945.6,400.0 960.2,405.0 972.3,392.9 984.4,390.4 996.6,380.7" fill="none" stroke="#8f98d6" stroke-width="0.9" stroke-dasharray="2.2,1.6"/><polyline points="986.9,339.4 994.2,368.6 992.0,385.0" fill="none" stroke="#8f98d6" stroke-width="0.9" stroke-dasharray="2.2,1.6"/><polyline points="792.6,292.6 798.0,311.0 803.8,317.8 813.0,313.2 817.5,304.0 826.7,302.9" fill="none" stroke="#8f98d6" stroke-width="0.9" stroke-dasharray="2.2,1.6"/><polygon points="726.0,448.0 731.0,446.0 735.0,452.0 739.0,456.0 732.0,457.0" fill="#bdd0e3" /></g></svg>
<div class="t" style="left:579.60px;width:400px;text-align:center;top:347.50px;font-size:7.2px;font-weight:400;color:#6a72a6;transform:scaleX(0.85);transform-origin:50% 0;">AMAZONAS</div>
<div class="t" style="left:517.00px;width:400px;text-align:center;top:383.10px;font-size:7.2px;font-weight:400;color:#6a72a6;transform:scaleX(0.85);transform-origin:50% 0;">ACRE</div>
<div class="t" style="left:596.70px;width:400px;text-align:center;top:411.60px;font-size:7.2px;font-weight:400;color:#6a72a6;transform:scaleX(0.85);transform-origin:50% 0;">RONDÔNIA</div>
<div class="t" style="left:687.00px;width:400px;text-align:center;top:344.00px;font-size:7.2px;font-weight:400;color:#737373;transform:scaleX(0.85);transform-origin:50% 0;">PARÁ</div>
<div class="t" style="left:671.50px;width:400px;text-align:center;top:370.09px;font-size:14.2px;font-weight:400;color:#7b7b7b;transform:scaleX(0.88);transform-origin:50% 0;">BRAZIL</div>
<div class="t" style="left:660.50px;width:400px;text-align:center;top:423.00px;font-size:7.2px;font-weight:400;color:#737373;transform:scaleX(0.85);transform-origin:50% 0;">MATO GROSSO</div>
<div class="t" style="left:579.50px;width:400px;text-align:center;top:458.82px;font-size:8.6px;font-weight:400;color:#737373;transform:scaleX(0.85);transform-origin:50% 0;">BOLIVIA</div>
<div class="t" style="left:693.00px;width:400px;text-align:center;top:291.50px;font-size:7.2px;font-weight:400;color:#6a72a6;transform:scaleX(0.85);transform-origin:50% 0;">AMAPÁ</div>
<div class="t" style="left:752.30px;width:400px;text-align:center;top:350.90px;font-size:7.2px;font-weight:400;color:#737373;transform:scaleX(0.85);transform-origin:50% 0;">MARANHÃO</div>
<div class="t" style="left:775.50px;width:400px;text-align:center;top:372.70px;font-size:7.2px;font-weight:400;color:#6a72a6;transform:scaleX(0.85);transform-origin:50% 0;">PIAUÍ</div>
<div class="t" style="left:785.00px;width:400px;text-align:center;top:412.80px;font-size:7.2px;font-weight:400;color:#6a72a6;transform:scaleX(0.85);transform-origin:50% 0;">BAHIA</div>
<div class="t" style="left:721.00px;width:400px;text-align:center;top:397.00px;font-size:7.2px;font-weight:400;color:#6a72a6;transform:scaleX(0.85);transform-origin:50% 0;">TO</div>
<div class="t" style="left:751.00px;width:400px;text-align:center;top:435.76px;font-size:12.2px;font-weight:400;color:#7a86c4;transform:scaleX(0.95);transform-origin:50% 0;">Brasília</div>
<div class="t" style="left:711.00px;width:400px;text-align:center;top:459.90px;font-size:7.2px;font-weight:400;color:#6a72a6;transform:scaleX(0.85);transform-origin:50% 0;">GOIÁS</div>
<div class="t" style="left:763.60px;width:400px;text-align:center;top:466.50px;font-size:7.2px;font-weight:400;color:#6a72a6;transform:scaleX(0.85);transform-origin:50% 0;">MINAS GERAIS</div>
<div class="t" style="left:657.00px;width:400px;text-align:center;top:470.90px;font-size:7.2px;font-weight:400;color:#737373;transform:scaleX(0.85);transform-origin:50% 0;">MATO</div>
<div class="t" style="left:657.00px;width:400px;text-align:center;top:478.30px;font-size:7.2px;font-weight:400;color:#737373;transform:scaleX(0.85);transform-origin:50% 0;">GROSSO</div>
<div class="t" style="left:657.00px;width:400px;text-align:center;top:485.70px;font-size:7.2px;font-weight:400;color:#737373;transform:scaleX(0.85);transform-origin:50% 0;">DO SUL</div>
<div class="t" style="left:785.00px;width:400px;text-align:center;top:487.00px;font-size:7.2px;font-weight:400;color:#6a72a6;transform:scaleX(0.85);transform-origin:50% 0;">ESPÍRITO</div>
<div class="t" style="left:780.50px;width:400px;text-align:center;top:510.50px;font-size:7.2px;font-weight:400;color:#6a72a6;transform:scaleX(0.85);transform-origin:50% 0;">RIO DE</div>
<div class="t" style="left:780.50px;width:400px;text-align:center;top:517.50px;font-size:7.2px;font-weight:400;color:#6a72a6;transform:scaleX(0.85);transform-origin:50% 0;">JANEIRO</div>
<div class="t" style="left:717.00px;width:400px;text-align:center;top:506.10px;font-size:7.2px;font-weight:400;color:#4c5494;transform:scaleX(0.85);transform-origin:50% 0;">SÃO PAULO</div>
<div class="t" style="left:626.00px;width:400px;text-align:center;top:523.01px;font-size:8.2px;font-weight:400;color:#737373;transform:scaleX(0.85);transform-origin:50% 0;">PARAGUAY</div>
<svg style="left:925px;top:449px" width="8" height="8"><circle cx="4" cy="4.3" r="3" fill="none" stroke="#d06a9a" stroke-width="1"/><circle cx="4" cy="4.3" r="1.2" fill="#d06a9a"/></svg>
<svg style="left:687.5px;top:533px" width="8" height="8"><rect x="0" y="0" width="3.6" height="3.6" fill="#f25022"/><rect x="4" y="0" width="3.6" height="3.6" fill="#7fba00"/><rect x="0" y="4" width="3.6" height="3.6" fill="#00a4ef"/><rect x="4" y="4" width="3.6" height="3.6" fill="#ffb900"/></svg>
<div class="t" style="left:697.70px;top:533.41px;font-size:7.2px;font-weight:400;color:#666666;transform:scaleX(0.9);transform-origin:0 0;">Microsoft Bing</div>
<div class="t" style="left:857.50px;top:535.07px;font-size:7.6px;font-weight:400;color:#222222;transform:scaleX(0.92);transform-origin:0 0;">© 2024 Microsoft Corporation</div>
<div class="t" style="left:957.70px;top:535.07px;font-size:7.6px;font-weight:400;color:#2a3a8a;transform:scaleX(0.9);transform-origin:0 0;"><u>Terms</u></div>
</body></html>
